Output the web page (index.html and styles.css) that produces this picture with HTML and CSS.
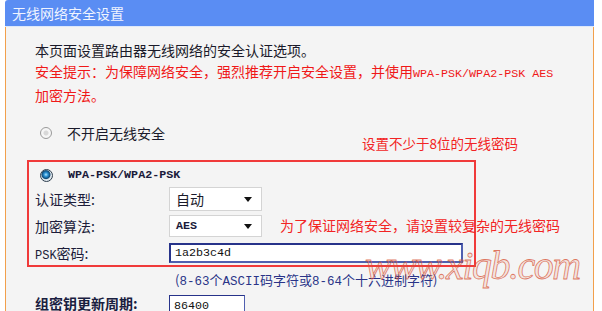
FILE: index.html
```html
<!DOCTYPE html>
<html lang="zh-CN">
<head>
    <meta charset="UTF-8">
    <title>无线网络安全设置</title>
    <link rel="stylesheet" href="styles.css">
</head>
<body>

    <div class="panel">
        <div class="titlebar">无线网络安全设置</div>

        <div class="content">
            <p class="intro">本页面设置路由器无线网络的安全认证选项。</p>
            <p class="warn">安全提示：为保障网络安全，强烈推荐开启安全设置，并使用<span class="mono">WPA-PSK/WPA2-PSK AES</span><br>加密方法。</p>

            <div class="option">
                <span class="radio"></span>
                <span>不开启无线安全</span>
            </div>

            <div class="wpa-box">
                <div class="option">
                    <span class="radio checked"></span>
                    <span class="mono strong">WPA-PSK/WPA2-PSK</span>
                </div>
                <div class="field">
                    <span class="label">认证类型:</span>
                    <div class="select tall">
                        <span>自动</span>
                        <svg width="8" height="5" viewBox="0 0 8 5"><path d="M0 0H8L4 5Z" fill="#111"/></svg>
                    </div>
                </div>
                <div class="field">
                    <span class="label">加密算法:</span>
                    <div class="select">
                        <span class="mono strong">AES</span>
                        <svg width="8" height="5" viewBox="0 0 8 5"><path d="M0 0H8L4 5Z" fill="#111"/></svg>
                    </div>
                </div>
                <div class="field">
                    <span class="label"><span class="mono">PSK</span>密码:</span>
                    <div class="textbox wide"><span class="mono">1a2b3c4d</span></div>
                </div>
            </div>

            <div class="hint">(<span class="mono">8-63</span>个<span class="mono">ASCII</span>码字符或<span class="mono">8-64</span>个十六进制字符)</div>

            <div class="field last">
                <span class="label bold">组密钥更新周期:</span>
                <div class="textbox short"><span class="mono">86400</span></div>
            </div>
        </div>

        <!-- red notes drawn over the page -->
        <div class="note note-top">设置不少于8位的无线密码</div>
        <div class="note note-mid">为了保证网络安全，请设置较复杂的无线密码</div>
        <div class="watermark">www.xiqb.com</div>
    </div>

</body>
</html>
```

FILE: styles.css
```css
body {
    margin: 0;
    padding: 0;
    background-color: #fff;
    font-family: "Noto Sans CJK SC", "Liberation Sans", sans-serif;
    font-size: 14px;
    color: #1a1a2a;
}

.mono {
    font-family: "Liberation Mono", "Noto Sans CJK SC", monospace;
    font-size: 11.7px;
}

.strong {
    font-weight: bold;
    color: #1a1a3a;
}

.panel {
    position: relative;
    margin-left: 5px;
    width: 589px;
    height: 311px;
    overflow: hidden;
}

.titlebar {
    height: 26px;
    line-height: 26px;
    padding-left: 7px;
    background-color: #5a8df3;
    border-bottom: 1px solid #dde8fa;
    border-top-left-radius: 3px;
    color: #f0f4ff;
    font-size: 14px;
}

.content {
    height: 300px;
    padding: 13px 0 0 29px;
    background-color: #f4f4f4;
    border-left: 1px solid #f2a04c;
    border-right: 1px solid #f2a04c;
}

.intro,
.warn {
    margin: 0;
    line-height: 21px;
}

.warn {
    color: #f01818;
}

.option {
    display: flex;
    align-items: center;
    height: 20px;
    margin-top: 17px;
    padding-left: 5px;
}

.option .radio {
    margin-right: 15px;
}

.radio {
    display: inline-block;
    box-sizing: border-box;
    width: 12px;
    height: 12px;
    border-radius: 50%;
    border: 1px solid #9a9a9a;
    background: radial-gradient(circle at 50% 50%, #d8d8d8 0, #d8d8d8 2px, #f6f6f6 3px);
}

.radio.checked {
    width: 13px;
    height: 13px;
    border-color: #2e3e4e;
    background: radial-gradient(circle at 45% 42%, #aee6ff 0, #2a90d2 2px, #124c78 4px, #dfe7ec 5px);
}

.wpa-box {
    width: 439px;
    margin: 17px 0 0 -8px;
    padding: 3px 0 0 6px;
    height: 100px;
    border: 2px solid #f03a3a;
}

.wpa-box .option {
    margin-top: 0;
}

.field {
    display: flex;
    align-items: center;
    height: 26px;
    margin-top: 1px;
}

.wpa-box .option + .field {
    margin-top: 1px;
}

.field.last {
    margin-top: 0;
}

.label {
    width: 134px;
    color: #1c1c3a;
}

.label .mono {
    font-size: 12px;
}

.label.bold {
    font-weight: bold;
    color: #1a2040;
}

.select {
    display: flex;
    align-items: center;
    justify-content: space-between;
    box-sizing: border-box;
    width: 93px;
    height: 22px;
    padding: 0 9px 0 6px;
    background-color: #fff;
    border: 1px solid #d4d4d4;
}

.select.tall {
    height: 24px;
}

.textbox {
    display: flex;
    align-items: center;
    box-sizing: border-box;
    height: 20px;
    padding-left: 4px;
    background-color: #fff;
    border: 2px solid #27338a;
    border-right-color: #5060b0;
    border-bottom-color: #5060b0;
    color: #111;
}

.textbox.wide {
    width: 294px;
}

.textbox.short {
    width: 76px;
    height: 22px;
    margin-top: 6px;
    border-width: 1px;
}

.hint {
    height: 20px;
    line-height: 20px;
    margin-top: 3px;
    padding-left: 140px;
    color: #2a3488;
    font-size: 13px;
}

.hint .mono {
    font-size: 12.5px;
}

.note {
    position: absolute;
    color: #f22424;
    font-size: 13.5px;
    line-height: 16px;
    white-space: nowrap;
}

.note-top {
    left: 357px;
    top: 135px;
}

.note-mid {
    left: 275px;
    top: 217px;
    font-size: 14px;
}

.watermark {
    position: absolute;
    left: 360px;
    top: 242px;
    font-family: "Liberation Serif", serif;
    font-style: italic;
    font-size: 40px;
    letter-spacing: -1.5px;
    color: rgba(230, 110, 80, 0.15);
    -webkit-text-stroke: 0.8px rgba(215, 80, 50, 0.75);
    white-space: nowrap;
}
```
